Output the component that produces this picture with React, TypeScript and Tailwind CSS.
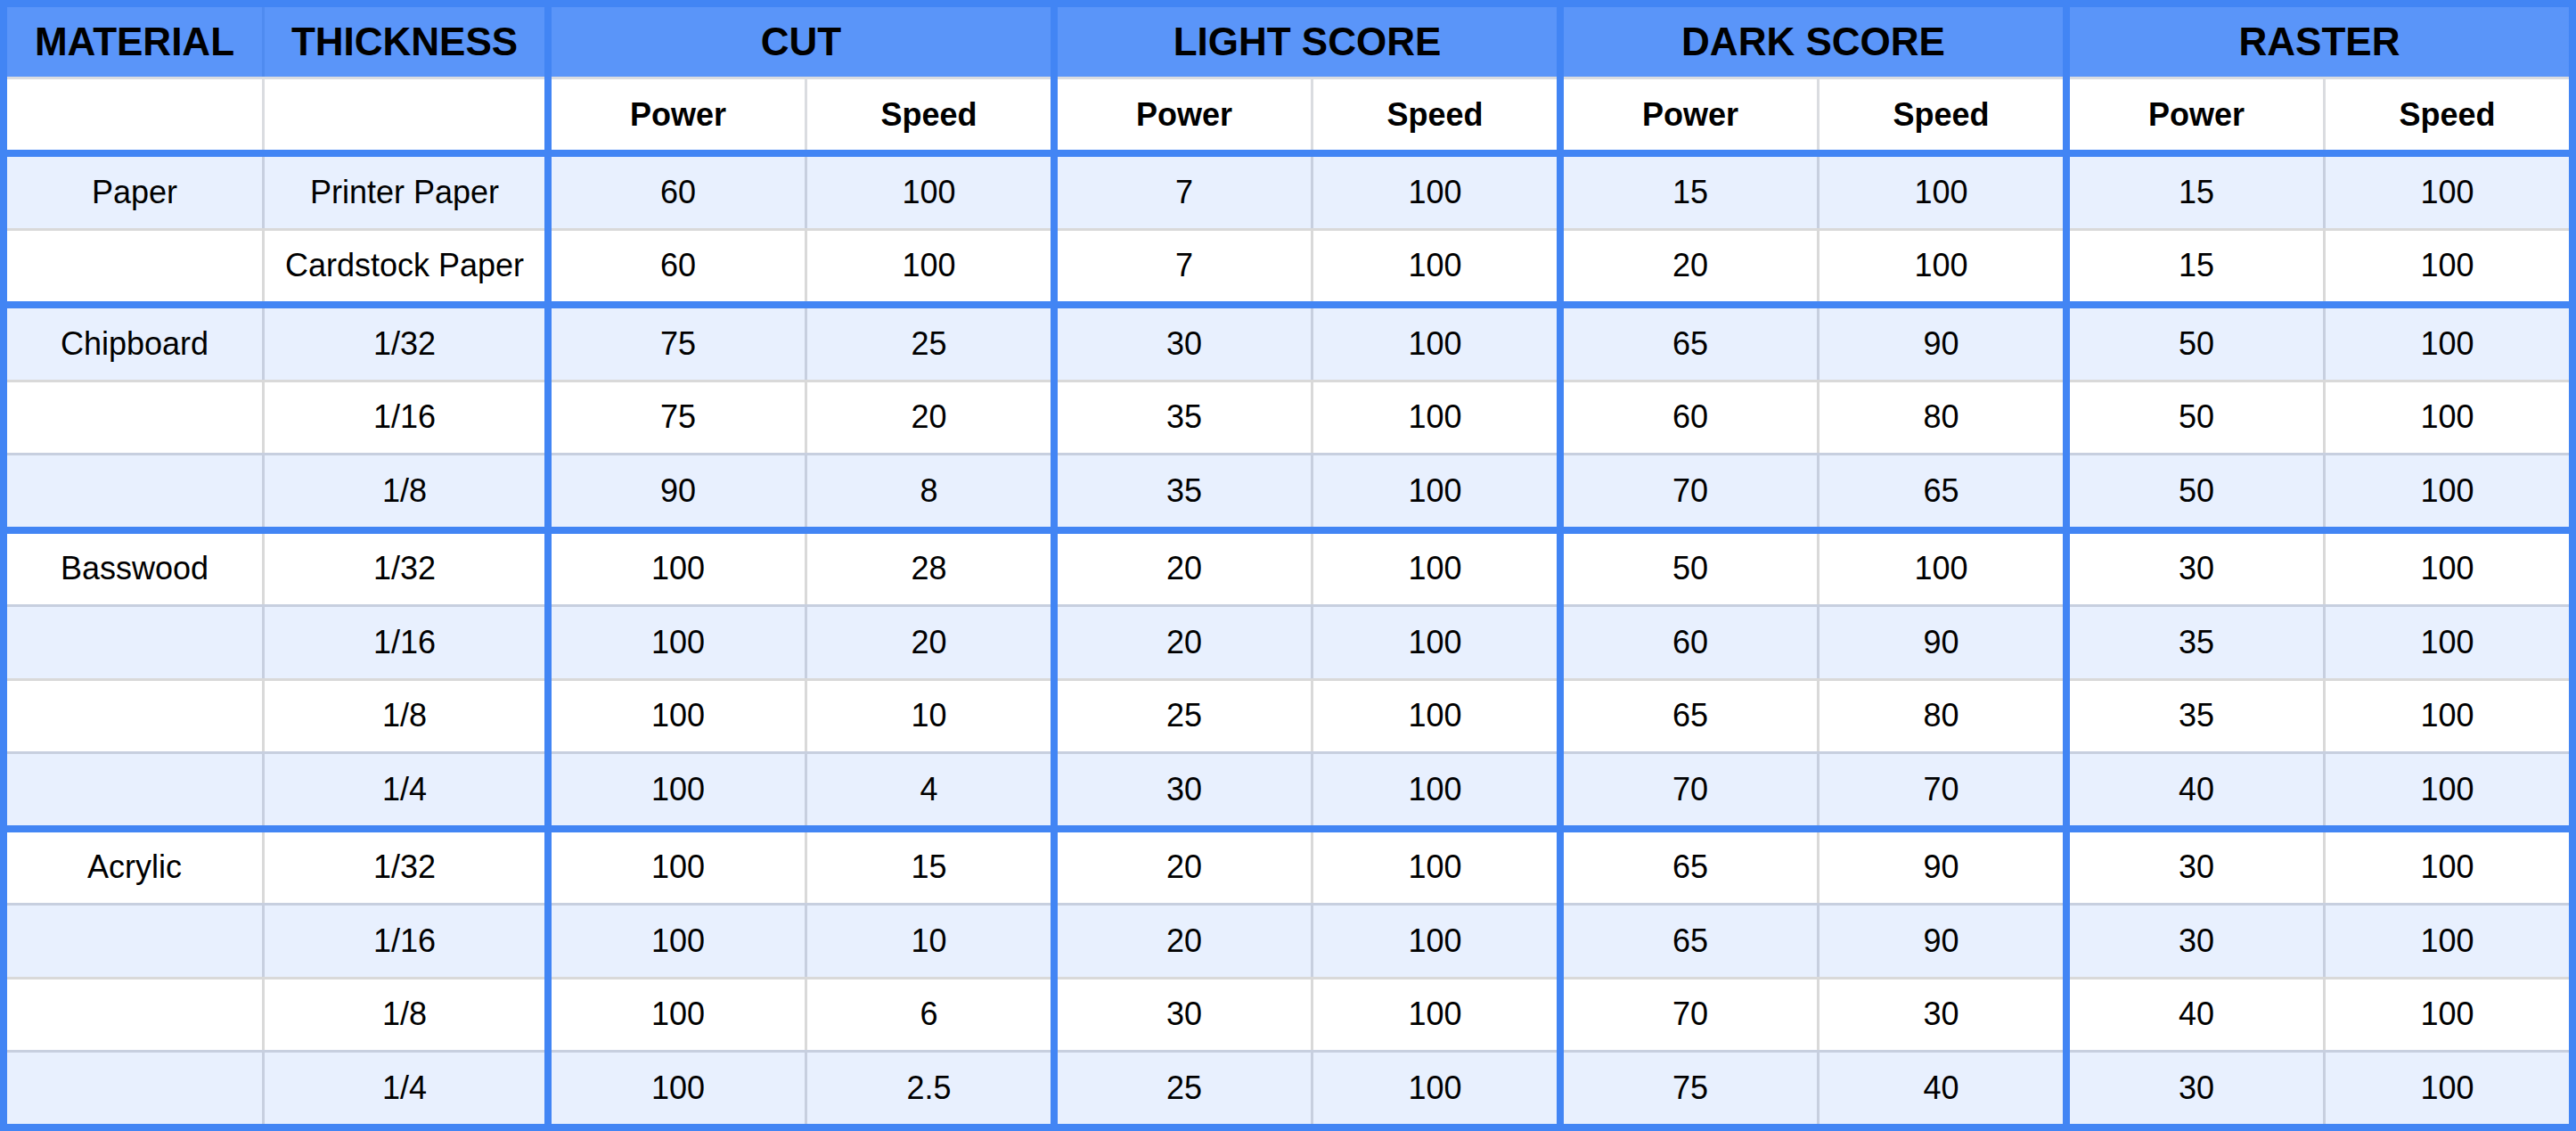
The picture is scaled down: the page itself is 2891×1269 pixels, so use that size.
type Row = { thickness: string; vals: string[] }
type Group = { material: string; rows: Row[] }

const groups: Group[] = [
  {
    material: 'Paper',
    rows: [
      { thickness: 'Printer Paper', vals: ['60', '100', '7', '100', '15', '100', '15', '100'] },
      { thickness: 'Cardstock Paper', vals: ['60', '100', '7', '100', '20', '100', '15', '100'] },
    ],
  },
  {
    material: 'Chipboard',
    rows: [
      { thickness: '1/32', vals: ['75', '25', '30', '100', '65', '90', '50', '100'] },
      { thickness: '1/16', vals: ['75', '20', '35', '100', '60', '80', '50', '100'] },
      { thickness: '1/8', vals: ['90', '8', '35', '100', '70', '65', '50', '100'] },
    ],
  },
  {
    material: 'Basswood',
    rows: [
      { thickness: '1/32', vals: ['100', '28', '20', '100', '50', '100', '30', '100'] },
      { thickness: '1/16', vals: ['100', '20', '20', '100', '60', '90', '35', '100'] },
      { thickness: '1/8', vals: ['100', '10', '25', '100', '65', '80', '35', '100'] },
      { thickness: '1/4', vals: ['100', '4', '30', '100', '70', '70', '40', '100'] },
    ],
  },
  {
    material: 'Acrylic',
    rows: [
      { thickness: '1/32', vals: ['100', '15', '20', '100', '65', '90', '30', '100'] },
      { thickness: '1/16', vals: ['100', '10', '20', '100', '65', '90', '30', '100'] },
      { thickness: '1/8', vals: ['100', '6', '30', '100', '70', '30', '40', '100'] },
      { thickness: '1/4', vals: ['100', '2.5', '25', '100', '75', '40', '30', '100'] },
    ],
  },
]

const modes = ['CUT', 'LIGHT SCORE', 'DARK SCORE', 'RASTER']

const Sep = () => <div className="w-2 shrink-0 self-stretch bg-[#4285f4]" />

const DataRow = ({
  material,
  thickness,
  vals,
  striped,
  first,
}: {
  material: string
  thickness: string
  vals: string[]
  striped: boolean
  first: boolean
}) => {
  const bg = striped ? 'bg-[#e8f0fe]' : 'bg-white'
  const line = striped ? 'border-[#c7cfdf]' : 'border-[#d9d9d9]'
  const top = first ? '' : 'border-t-[3px]'
  const cell = `flex items-center justify-center ${bg} ${line} ${top}`

  return (
    <div
      className={
        first
          ? 'flex h-[87.5px] border-t-8 border-[#4285f4]'
          : 'flex h-[82.5px]'
      }
    >
      <div className={`${cell} w-[286px] shrink-0`}>{first ? material : ''}</div>
      <div className={`${cell} w-[317px] shrink-0 border-l-[3px]`}>{thickness}</div>
      {[0, 1, 2, 3].map((g) => (
        <div key={g} className="flex">
          <Sep />
          <div className={`${cell} w-[284px] shrink-0`}>{vals[g * 2]}</div>
          <div className={`${cell} w-[276px] shrink-0 border-l-[3px]`}>{vals[g * 2 + 1]}</div>
        </div>
      ))}
    </div>
  )
}

const App = () => {
  let idx = 0

  return (
    <div className="bg-white font-['Liberation_Sans',Arial,sans-serif] text-black">
      <div className="w-[2891px] border-8 border-[#4285f4] text-[36px]">
        {/* group titles */}
        <div className="flex h-[78px] bg-[#5a95f9] text-[44px] font-bold">
          <div className="flex w-[286px] shrink-0 items-center justify-center">MATERIAL</div>
          <div className="flex w-[317px] shrink-0 items-center justify-center border-l-[3px] border-[#4f8bf0]">
            THICKNESS
          </div>
          {modes.map((m) => (
            <div key={m} className="flex">
              <Sep />
              <div className="flex w-[560px] shrink-0 items-center justify-center">{m}</div>
            </div>
          ))}
        </div>

        {/* sub headers */}
        <div className="flex h-[82px] text-[36px] font-bold">
          <div className="w-[286px] shrink-0 border-t-[3px] border-[#dadce0] bg-white" />
          <div className="w-[317px] shrink-0 border-t-[3px] border-l-[3px] border-[#dadce0] bg-white" />
          {modes.map((m) => (
            <div key={m} className="flex">
              <Sep />
              <div className="flex w-[284px] shrink-0 items-center justify-center border-t-[3px] border-[#dadce0] bg-white">
                Power
              </div>
              <div className="flex w-[276px] shrink-0 items-center justify-center border-t-[3px] border-l-[3px] border-[#dadce0] bg-white">
                Speed
              </div>
            </div>
          ))}
        </div>

        {groups.map((grp) =>
          grp.rows.map((r, i) => {
            const striped = idx % 2 === 0
            idx++
            return (
              <DataRow
                key={grp.material + r.thickness}
                material={grp.material}
                thickness={r.thickness}
                vals={r.vals}
                striped={striped}
                first={i === 0}
              />
            )
          }),
        )}
      </div>
    </div>
  )
}

export default App
